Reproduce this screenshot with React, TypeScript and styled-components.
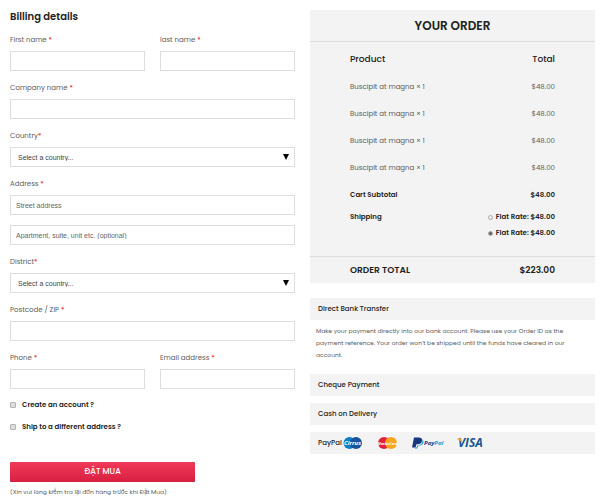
import React from "react";
import styled, { createGlobalStyle } from "styled-components";

const GlobalStyle = createGlobalStyle`
  *, *::before, *::after { box-sizing: border-box; }
  body {
    margin: 0;
    background: #fff;
    color: #5c5c5c;
    font: 400 7px/16px Poppins, Inter, "Open Sans", sans-serif;
  }
  button { font-family: inherit; }
  input, select { font-family: "Liberation Sans", Arial, sans-serif; }
`;

const Page = styled.main`
  display: grid;
  grid-template-columns: 1fr 1fr;
  gap: 15px;
  align-items: start;
  padding: 10px 7px 0 10px;
`;

const Form = styled.form`
  display: flex;
  flex-direction: column;
`;

const Title = styled.h2`
  margin: 0 0 8px;
  color: #222;
  font-size: 10px;
  font-weight: 600;
  line-height: 14px;
`;

const Fields = styled.div`
  display: grid;
  grid-template-columns: 1fr 1fr;
  gap: 9px 15px;
`;

const Field = styled.div<{ $wide?: boolean }>`
  display: flex;
  flex-direction: column;
  min-width: 0;
  grid-column: ${(p) => (p.$wide ? "1 / -1" : "auto")};
`;

const Label = styled.label`
  margin-bottom: 3px;
`;

const Star = styled.span`
  color: #f00;
`;

const Input = styled.input`
  width: 100%;
  height: 20px;
  padding: 0 5px;
  border: 1px solid #ddd;
  border-radius: 0;
  background: #fff;
  color: #333;
  font-size: 7px;
  &::placeholder { color: #666; opacity: 1; }
  & + & { margin-top: 10px; }
`;

const SelectBox = styled.div`
  position: relative;
  display: flex;
`;

const Select = styled.select`
  appearance: none;
  width: 100%;
  height: 20px;
  padding: 0 20px 0 7px;
  border: 1px solid #ddd;
  border-radius: 0;
  background: #fff;
  color: #444;
  font-size: 7px;
`;

const Arrow = styled.svg`
  position: absolute;
  top: 7px;
  right: 6px;
  width: 6px;
  height: 6px;
  pointer-events: none;
`;

const Options = styled.div`
  display: flex;
  flex-direction: column;
  gap: 6px;
  margin: 8px 0 27px;
`;

const Check = styled.label`
  display: flex;
  align-items: center;
  gap: 6px;
  color: #222;
  font-weight: 600;
`;

const Checkbox = styled.input`
  appearance: none;
  width: 6px;
  height: 6px;
  margin: 0;
  border: 1px solid #b5b5b5;
  border-radius: 1px;
  background: #ddd;
  &:checked { background: #666; }
`;

const Submit = styled.button`
  width: 65%;
  height: 20px;
  padding: 0;
  border: 0;
  border-radius: 1px;
  background: linear-gradient(#f03a58, #d81f42);
  color: #fff;
  font-size: 8px;
  font-weight: 500;
`;

const Note = styled.p`
  margin: 2px 0 0;
  font-size: 6px;
`;

const Side = styled.aside`
  min-width: 0;
`;

const Order = styled.section`
  background: #f3f3f3;
`;

const OrderTitle = styled.h2`
  margin: 0;
  border-bottom: 1px solid #ddd;
  color: #222;
  font-size: 12px;
  font-weight: 600;
  line-height: 31px;
  text-align: center;
`;

const Table = styled.table`
  width: 100%;
  border-collapse: collapse;
`;

const Cell = styled.td`
  padding: 0 0 0 40px;
  text-align: left;
  font-weight: inherit;
  vertical-align: top;
  &:last-child { padding-left: 0; padding-right: 40px; text-align: right; }
`;

const HeadCell = styled(Cell)`
  padding-top: 4px;
`;

const HeadRow = styled.tr`
  color: #222;
  font-size: 9px;
  font-weight: 500;
  line-height: 27px;
`;

const ItemRow = styled.tr`
  line-height: 27px;
`;

const SubtotalRow = styled.tr`
  color: #222;
  font-weight: 600;
  line-height: 27px;
`;

const ShippingCell = styled(Cell)`
  padding-top: 1px;
`;

const ShippingRow = styled.tr`
  height: 48px;
  color: #222;
  font-weight: 600;
  line-height: 16px;
`;

const TotalRow = styled.tr`
  border-top: 1px solid #ddd;
  color: #222;
  font-size: 9px;
  font-weight: 600;
  line-height: 26px;
`;

const Rate = styled.label`
  display: flex;
  align-items: center;
  justify-content: flex-end;
  gap: 3px;
`;

const Radio = styled.input`
  appearance: none;
  width: 5px;
  height: 5px;
  margin: 0;
  border: 1px solid #aaa;
  border-radius: 50%;
  background: #eee;
  &:checked { background: #666; }
`;

const Payments = styled.section`
  display: flex;
  flex-direction: column;
  gap: 7px;
  margin-top: 15px;
`;

const Method = styled.button`
  display: flex;
  align-items: center;
  width: 100%;
  height: 22px;
  padding: 0 8px;
  border: 0;
  background: #f3f3f3;
  color: #222;
  font-size: 7px;
  font-weight: 500;
  text-align: left;
`;

const Details = styled.p`
  margin: -2px 24px 6px 6px;
  font-size: 6px;
  line-height: 12px;
`;

const Logos = styled.svg`
  width: 150px;
  height: 20px;
`;

const Required = () => <Star>*</Star>;

type TextFieldProps = { id: string; label: string; wide?: boolean; type?: string };

const TextField = ({ id, label, wide, type = "text" }: TextFieldProps) => (
  <Field $wide={wide}>
    <Label htmlFor={id}>{label} <Required /></Label>
    <Input id={id} type={type} />
  </Field>
);

const SelectField = ({ id, label }: { id: string; label: string }) => (
  <Field $wide>
    <Label htmlFor={id}>{label}<Required /></Label>
    <SelectBox>
      <Select id={id}><option>Select a country...</option></Select>
      <Arrow viewBox="0 0 6 6" aria-hidden="true"><path d="M0 0H6L3 6Z" /></Arrow>
    </SelectBox>
  </Field>
);

const CardLogos = () => (
  <Logos viewBox="0 -3 150 20" role="img" aria-label="Cirrus, MasterCard, PayPal, Visa">
    <circle cx="7.500" cy="7" r="6" fill="#0a7ec2" />
    <circle cx="14" cy="7" r="6" fill="#17549b" />
    <text x="10.500" y="9" textAnchor="middle" fill="#fff" fontFamily="Open Sans" fontSize="6" fontWeight="700" fontStyle="italic">Cirrus</text>
    <circle cx="42" cy="7" r="6" fill="#e6203c" />
    <circle cx="49" cy="7" r="6" fill="#f9a51b" />
    <text x="45.500" y="8.500" textAnchor="middle" fill="#fff" fontFamily="Open Sans" fontSize="3.600" fontWeight="700" fontStyle="italic">MasterCard</text>
    <path d="M72 1.500h4.500c3 0 4 1.500 3.500 3.500-.5 2.300-2 3.300-4.300 3.300h-1.400L73.600 11.500H70Z" fill="#17377e" />
    <path d="M80.500 3.500c1 .8 1.200 1.900.8 3.200-.5 1.900-1.900 2.800-4 2.800h-1.200l-.7 3h-2.700l.5-1h1.500l.8-2.500h1.400c2.300 0 3.700-1.800 3.600-5.500Z" fill="#169bd7" />
    <text x="82" y="9" fill="#17377e" fontFamily="Open Sans" fontSize="6" fontWeight="700" fontStyle="italic">Pay<tspan fill="#169bd7">Pal</tspan></text>
    <text x="116" y="11" fill="#17559d" fontFamily="Open Sans" fontSize="12" fontWeight="700" fontStyle="italic">VISA</text>
    <path d="M115 2.400h3.800l1.400 4.500Q118.500 4 115 2.900Z" fill="#f2a51a" />
  </Logos>
);

const items = [1, 2, 3, 4];

export default function App() {
  return (
    <>
      <GlobalStyle />
      <Page>
        <Form onSubmit={(e) => e.preventDefault()}>
          <Title>Billing details</Title>
          <Fields>
            <TextField id="first" label="First name" />
            <TextField id="last" label="last name" />
            <TextField id="company" label="Company name" wide />
            <SelectField id="country" label="Country" />
            <Field $wide>
              <Label htmlFor="street">Address <Required /></Label>
              <Input id="street" placeholder="Street address" />
              <Input aria-label="Apartment" placeholder="Apartment, suite, unit etc. (optional)" />
            </Field>
            <SelectField id="district" label="District" />
            <TextField id="zip" label="Postcode / ZIP" wide />
            <TextField id="phone" label="Phone" type="tel" />
            <TextField id="email" label="Email address" type="email" />
          </Fields>
          <Options>
            <Check><Checkbox type="checkbox" />Create an account ?</Check>
            <Check><Checkbox type="checkbox" />Ship to a different address ?</Check>
          </Options>
          <Submit type="submit">ĐẶT MUA</Submit>
          <Note>(Xin vui lòng kiểm tra lại đơn hàng trước khi Đặt Mua)</Note>
        </Form>
        <Side>
          <Order>
            <OrderTitle>YOUR ORDER</OrderTitle>
            <Table>
              <thead>
                <HeadRow><HeadCell as="th">Product</HeadCell><HeadCell as="th">Total</HeadCell></HeadRow>
              </thead>
              <tbody>
                {items.map((n) => (
                  <ItemRow key={n}><Cell>Buscipit at magna × 1</Cell><Cell>$48.00</Cell></ItemRow>
                ))}
                <SubtotalRow><Cell as="th">Cart Subtotal</Cell><Cell>$48.00</Cell></SubtotalRow>
                <ShippingRow>
                  <ShippingCell as="th">Shipping</ShippingCell>
                  <ShippingCell>
                    <Rate><Radio type="radio" name="rate" />Flat Rate: $48.00</Rate>
                    <Rate><Radio type="radio" name="rate" defaultChecked />Flat Rate: $48.00</Rate>
                  </ShippingCell>
                </ShippingRow>
              </tbody>
              <tfoot>
                <TotalRow><Cell as="th">ORDER TOTAL</Cell><Cell>$223.00</Cell></TotalRow>
              </tfoot>
            </Table>
          </Order>
          <Payments>
            <Method type="button">Direct Bank Transfer</Method>
            <Details>
              Make your payment directly into our bank account. Please use your Order ID as the
              payment reference. Your order won’t be shipped until the funds have cleared in our
              account.
            </Details>
            <Method type="button">Cheque Payment</Method>
            <Method type="button">Cash on Delivery</Method>
            <Method type="button">PayPal<CardLogos /></Method>
          </Payments>
        </Side>
      </Page>
    </>
  );
}
